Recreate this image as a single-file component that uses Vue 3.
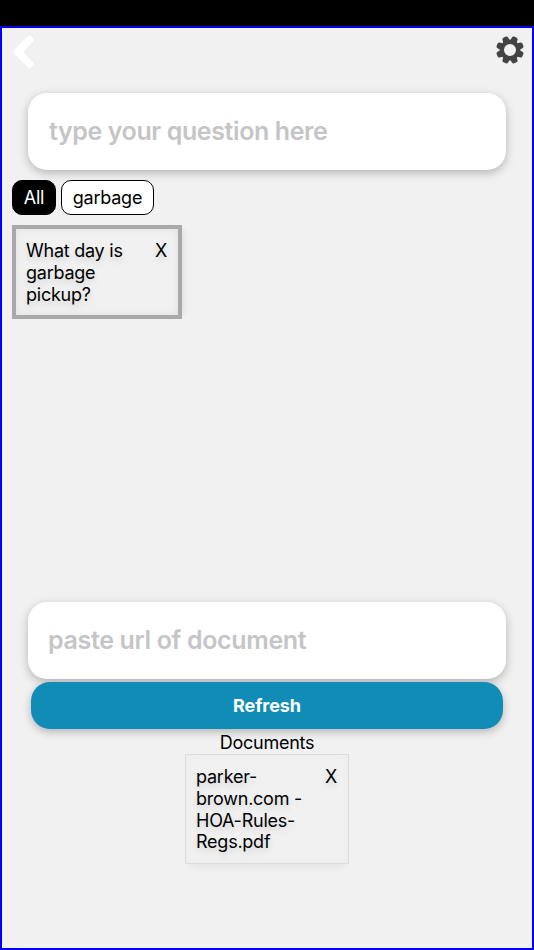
<template>
  <div class="screen">
    <div class="status-bar"></div>
    <main class="frame">
      <header class="toolbar">
        <button class="icon-btn" aria-label="Back">
          <svg width="23" height="34" viewBox="0 0 23 34">
            <path
              d="M15.6 1.4 Q17.6 -0.2 19.5 1.7 L20.9 3.2 Q22.6 5 20.9 6.8 L11.1 17 L20.9 27 Q22.6 28.8 20.9 30.5 L19.5 32 Q17.5 33.8 15.6 32.1 L1.5 18.3 Q0.2 17 1.5 15.6 Z"
              fill="#fff"
            />
          </svg>
        </button>
        <button class="icon-btn" aria-label="Settings">
          <svg width="28" height="28" viewBox="-14 -14 28 28">
            <circle r="8.2" fill="none" stroke="#434343" stroke-width="4.4" />
            <path
              v-for="angle in teeth"
              :key="angle"
              :transform="`rotate(${angle})`"
              d="M-3.5 -8.6 L-3 -12.6 Q-2.7 -13.6 -1.8 -13.8 Q0 -14.2 1.8 -13.8 Q2.7 -13.6 3 -12.6 L3.5 -8.6 Z"
              fill="#434343"
            />
          </svg>
        </button>
      </header>

      <input v-model="question" class="field" placeholder="type your question here" />

      <div class="tags">
        <button
          v-for="tag in tags"
          :key="tag"
          class="tag"
          :class="{ active: tag === activeTag }"
          @click="activeTag = tag"
        >
          {{ tag }}
        </button>
      </div>

      <section class="questions">
        <article v-for="q in questions" :key="q" class="card question">
          <p class="card-text">{{ q }}</p>
          <button class="remove">X</button>
        </article>
      </section>

      <input v-model="url" class="field url" placeholder="paste url of document" />
      <button class="refresh">Refresh</button>

      <h2 class="title">Documents</h2>
      <article v-for="doc in documents" :key="doc" class="card document">
        <p class="card-text">{{ doc }}</p>
        <button class="remove">X</button>
      </article>
    </main>
  </div>
</template>

<script setup>
import { ref } from "vue";

const question = ref("");
const url = ref("");
const activeTag = ref("All");
const tags = ref(["All", "garbage"]);
const questions = ref(["What day is garbage pickup?"]);
const documents = ref(["parker-brown.com - HOA-Rules-Regs.pdf"]);

// gear teeth, in degrees
const teeth = [22.5, 67.5, 112.5, 157.5, 202.5, 247.5, 292.5, 337.5];
</script>

<style scoped>
.screen {
  height: 950px;
  display: flex;
  flex-direction: column;
  font-family: Inter, "Liberation Sans", sans-serif;
  font-size: 18px;
  line-height: 21.7px;
  letter-spacing: -0.24px;
  color: #000;
}

button {
  margin: 0;
  padding: 0;
  border: 0;
  background: none;
  color: inherit;
  font: inherit;
  letter-spacing: inherit;
  text-shadow: inherit;
}

.status-bar {
  height: 26px;
  background: #000;
}

.frame {
  flex: 1;
  box-sizing: border-box;
  display: flex;
  flex-direction: column;
  align-items: center;
  border: 2px solid #0000fa;
  background: #f1f1f1;
}

.toolbar {
  align-self: stretch;
  height: 65px;
  box-sizing: border-box;
  padding: 7px 8px 0 10px;
  display: flex;
  justify-content: space-between;
  align-items: flex-start;
}

.icon-btn {
  display: flex;
}

.icon-btn + .icon-btn {
  padding-top: 1px;
}

.field {
  width: 478px;
  height: 77px;
  flex: none;
  box-sizing: border-box;
  margin: 0;
  padding: 0 21px 1px;
  border: 0;
  border-radius: 19px;
  outline: 0;
  background: #fff;
  box-shadow: 0 3px 10px rgba(0, 0, 0, 0.25);
  font: 600 25px Inter, "Liberation Sans", sans-serif;
  letter-spacing: -0.4px;
}

.field.url {
  padding-left: 20px;
  letter-spacing: -0.34px;
}

.field::placeholder {
  color: #c5c5c7;
  opacity: 1;
}

.tags {
  align-self: stretch;
  display: flex;
  gap: 5px;
  padding: 10px 10px 0;
}

.tag {
  height: 35px;
  box-sizing: border-box;
  padding: 0 10.8px;
  border: 1.5px solid #000;
  border-radius: 10px;
  background: #fff;
}

.tag.active {
  background: #000;
  color: #fff;
}

.questions {
  align-self: stretch;
  height: 377px;
  box-sizing: border-box;
  margin-top: 10px;
  padding-left: 10px;
}

.card {
  box-sizing: border-box;
  display: flex;
  justify-content: space-between;
  align-items: flex-start;
  text-shadow: 0 4px 7px rgba(0, 0, 0, 0.14);
}

.question {
  width: 170px;
  height: 94px;
  padding: 11.4px 11px 0 10px;
  border: 4px solid #a9a9a9;
  box-shadow: inset 0 0 9px rgba(0, 0, 0, 0.07), 6px 0 6px -4px rgba(0, 0, 0, 0.07);
}

.card-text {
  width: 112px;
  margin: 0;
}

.refresh {
  width: 472px;
  height: 47px;
  flex: none;
  margin-top: 3px;
  border-radius: 19px;
  background: #108cb7;
  box-shadow: 0 3px 8px rgba(0, 0, 0, 0.25);
  color: #fff;
  font-weight: 700;
  letter-spacing: -0.05px;
}

.title {
  margin: 3px 0 0;
  font-size: 18px;
  font-weight: 400;
}

.document {
  width: 164px;
  height: 110px;
  padding: 11.4px 11px 0 10px;
  border: 1px solid #dcdcdc;
  box-shadow: inset 0 0 8px rgba(0, 0, 0, 0.03), 0 9px 8px -5px rgba(0, 0, 0, 0.05);
}
</style>

<style>
body {
  margin: 0;
  background: #f1f1f1;
}
</style>
